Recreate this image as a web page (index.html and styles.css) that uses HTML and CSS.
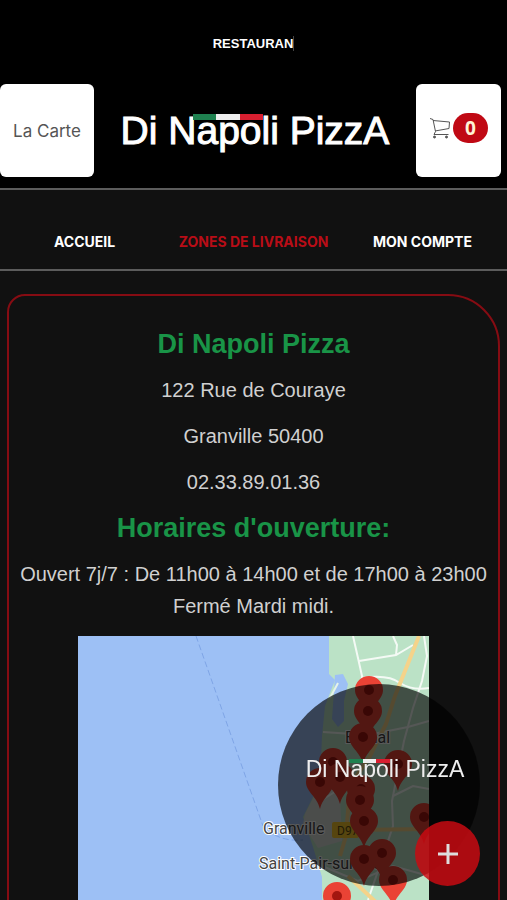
FILE: index.html
```html
<!DOCTYPE html>
<html lang="fr">
<head>
    <meta charset="UTF-8">
    <meta name="viewport" content="width=device-width, initial-scale=1.0">
    <title>Di Napoli Pizza</title>
    <link rel="stylesheet" href="styles.css">
</head>
<body>
    <header class="header">
        <div class="ticker"><span class="typed">RESTAURAN</span></div>
        <div class="header-row">
            <button type="button" class="btn btn-menu">La Carte</button>
            <div class="logo">Di Napoli PizzA<span class="flag"></span></div>
            <button type="button" class="btn btn-cart" aria-label="Panier">
                <svg class="cart-icon" width="22" height="22" viewBox="0 0 22 22" fill="none" stroke="#555" stroke-width="1">
                    <path d="M1 1.500L4 2.500L6.500 14.500M4 3.500L20.500 5L20 11.500L6 14M6.500 14.500L5 17.500H19.500"/>
                    <circle cx="5.500" cy="20" r="1" fill="#555"/>
                    <circle cx="17.500" cy="20" r="1" fill="#555"/>
                </svg>
                <span class="badge">0</span>
            </button>
        </div>
    </header>

    <nav class="nav">
        <a href="#accueil">ACCUEIL</a>
        <a href="#zones" class="active">ZONES DE LIVRAISON</a>
        <a href="#compte">MON COMPTE</a>
    </nav>

    <main class="content">
        <section class="card">
            <h2>Di Napoli Pizza</h2>
            <p>122 Rue de Couraye</p>
            <p>Granville 50400</p>
            <p>02.33.89.01.36</p>
            <h2>Horaires d'ouverture:</h2>
            <p>Ouvert 7j/7 : De 11h00 à 14h00 et de 17h00 à 23h00<br>Fermé Mardi midi.</p>

            <svg class="map" viewBox="0 0 351 450" role="img" aria-label="Zones de livraison">
                <defs>
                    <g id="pin">
                        <path d="M0 27C-3 14-14 10-14 0A14 14 0 1 1 14 0C14 10 3 14 0 27Z" fill="#ea4335"/>
                        <circle r="5" fill="#a3160f"/>
                    </g>
                </defs>
                <rect width="351" height="450" fill="#9dc0f5"/>
                <path d="M118 0L185 190Q200 206 225 204" fill="none" stroke="#7fa5e6" stroke-dasharray="6 3"/>

                <!-- land -->
                <path d="M251 0V38L257 44L247 70L244 100L242 147L225 181L235 211L244 241L245 450H351V0Z" fill="#bbe2c6"/>
                <path d="M257 39L265 38L270 48L266 65V85L260 91L254 83L256 55Z" fill="#9dc0f5"/>
                <path d="M252 62L260 47" stroke="#e6f3e8" stroke-width="2"/>
                <path d="M227 178L244 145L262 160L264 205L240 212L225 188Z" fill="#d6dcd8"/>

                <!-- roads -->
                <g fill="none" stroke="#f4faf5" stroke-width="2">
                    <path d="M275 0L280 22L284 40L283 60"/>
                    <path d="M281 25L318 19L335 9M318 19L319 9L315 0"/>
                    <path d="M346 0L349 20L344 45L335 72L326 105L314 165L315 190L300 235L290 264"/>
                    <path d="M284 42Q310 38 322 47Q335 55 351 52"/>
                    <path d="M245 96L290 99L330 91L351 85"/>
                    <path d="M315 160L335 150L351 153M242 165L275 145"/>
                    <path d="M244 230L280 245L315 230L351 240"/>
                </g>
                <path d="M341 0L317 60L308 88L292 120L272 150L268 200L262 220M273 194L351 193M270 240L302 270L330 330" fill="none" stroke="#f4d38a" stroke-width="4"/>

                <g class="map-label">
                    <text x="267" y="107">Bréhal</text>
                    <text x="185" y="198">Granville</text>
                    <text x="181" y="233">Saint-Pair-sur-Mer</text>
                </g>
                <rect x="254" y="186" width="27" height="16" rx="2" fill="#f6c62d"/>
                <text x="259" y="199" class="road-label">D97</text>

                <use href="#pin" x="291" y="54"/>
                <use href="#pin" x="290" y="75"/>
                <use href="#pin" x="285" y="101"/>
                <use href="#pin" x="255" y="126"/>
                <use href="#pin" x="320" y="128"/>
                <use href="#pin" x="262" y="141"/>
                <use href="#pin" x="242" y="146"/>
                <use href="#pin" x="283" y="153"/>
                <use href="#pin" x="282" y="164"/>
                <use href="#pin" x="346" y="181"/>
                <use href="#pin" x="286" y="185"/>
                <use href="#pin" x="304" y="217"/>
                <use href="#pin" x="286" y="223"/>
                <use href="#pin" x="315" y="244"/>
                <use href="#pin" x="259" y="260"/>
            </svg>
        </section>
    </main>

    <div class="bubble">
        <div class="logo logo-small">Di Napoli PizzA<span class="flag"></span></div>
        <button type="button" class="btn-plus" aria-label="Ouvrir">
            <svg width="20" height="20" viewBox="0 0 20 20" stroke="#ddd" stroke-width="3">
                <path d="M10 0V20M0 10H20"/>
            </svg>
        </button>
    </div>
</body>
</html>
```

FILE: styles.css
```css
* {
    box-sizing: border-box;
}
body {
    display: flex;
    flex-direction: column;
    height: 100vh;
    margin: 0;
    overflow: hidden;
    background-color: #111;
    color: #fff;
    font-family: "Liberation Sans", Arial, sans-serif;
}
.header {
    background-color: #000;
    border-bottom: 2px solid #5c5c5c;
    padding-bottom: 11px;
}
.ticker {
    display: flex;
    align-items: center;
    justify-content: center;
    height: 84px;
    padding-top: 2px;
    font-size: 13px;
    font-weight: bold;
}
.typed {
    border-right: 1px solid #444;
}
.header-row {
    display: flex;
    align-items: center;
    justify-content: space-between;
    padding-right: 6px;
}
.btn {
    display: flex;
    align-items: center;
    justify-content: center;
    height: 93px;
    padding: 0;
    border: none;
    border-radius: 6px;
    background-color: #fff;
    color: #555;
    font-family: Inter, sans-serif;
    font-size: 17px;
}
.btn-menu {
    width: 94px;
}
.btn-cart {
    gap: 2px;
    width: 85px;
    padding-bottom: 6px;
}
.badge {
    width: 35px;
    border-radius: 15px;
    background-color: #c00914;
    color: #fff3d6;
    font-family: "Noto Sans", sans-serif;
    font-size: 19px;
    font-weight: bold;
    line-height: 30px;
}
.logo {
    position: relative;
    font-size: 39px;
    line-height: 1;
    white-space: nowrap;
    -webkit-text-stroke: 1px #fff;
}
.flag {
    position: absolute;
    top: 8%;
    left: 27%;
    width: 26%;
    height: 15%;
    background: linear-gradient(to right, #1f8150 33%, #eee 33%, #eee 67%, #d81f30 67%);
}
.nav {
    display: grid;
    grid-template-columns: repeat(3, 1fr);
    padding: 42px 0 17px;
    border-bottom: 2px solid #5c5c5c;
    font-family: Inter, sans-serif;
    font-size: 14px;
    font-weight: bold;
    line-height: 20px;
    text-align: center;
}
.nav a {
    color: #fff;
    text-decoration: none;
}
.nav .active {
    color: #b90d17;
}
.content {
    flex: 1;
    min-height: 0;
    padding: 23px 7px 0;
    overflow: hidden;
}
.card {
    display: flex;
    flex-direction: column;
    align-items: center;
    gap: 14px;
    padding: 32px 8px;
    border: 2px solid #860c13;
    border-radius: 18px 52px 18px 18px;
    text-align: center;
    line-height: 32px;
}
.card h2 {
    margin: 0;
    color: #199447;
    font-size: 27px;
}
.card p {
    margin: 0;
    color: #d0d0d0;
    font-size: 20px;
}
.map {
    width: 351px;
    max-width: 100%;
}
.map-label {
    fill: #444;
    stroke: #fff;
    stroke-width: 2px;
    paint-order: stroke;
    font-family: Roboto, sans-serif;
    font-size: 16px;
}
.road-label {
    fill: #5c4a12;
    font-family: Roboto, sans-serif;
    font-size: 12px;
}
.bubble {
    position: fixed;
    right: 27px;
    bottom: 14px;
    display: flex;
    align-items: center;
    justify-content: center;
    width: 202px;
    height: 202px;
    padding: 0 0 32px 12px;
    border-radius: 50%;
    background-color: rgba(0, 0, 0, 0.65);
}
.logo-small {
    font-size: 23px;
    color: #eee;
    -webkit-text-stroke: 0;
}
.btn-plus {
    position: absolute;
    right: 0;
    bottom: 0;
    display: flex;
    align-items: center;
    justify-content: center;
    width: 65px;
    height: 65px;
    padding: 0;
    border: none;
    border-radius: 50%;
    background-color: rgba(200, 10, 18, 0.85);
}
```
